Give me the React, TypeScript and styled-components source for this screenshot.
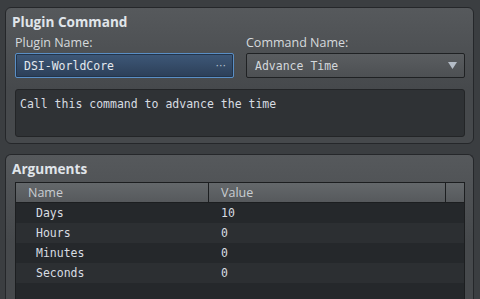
import React from "react";
import styled, { createGlobalStyle } from "styled-components";

const Global = createGlobalStyle`
  html, body { margin: 0; padding: 0; background: #3b3e41; }
  body { width: 480px; height: 299px; overflow: hidden; }
  * { box-sizing: border-box; }
`;

const Page = styled.div`
  display: flex;
  flex-direction: column;
  gap: 10px;
  padding: 7px 6px 0 5px;
  height: 299px;
  font-family: "Open Sans", "Noto Sans", sans-serif;
`;

const Panel = styled.section<{ $grow?: boolean }>`
  border: 1px solid #25272a;
  border-radius: 6px;
  background: linear-gradient(#56595c, #46494c 60%);
  padding: 5px 8px 6px 9px;
  display: flex;
  flex-direction: column;
  ${(p) => (p.$grow ? "flex: 1; border-bottom: none; border-bottom-left-radius: 0; border-bottom-right-radius: 0; padding-bottom: 0;" : "")}
`;

const Title = styled.div`
  font-weight: 700;
  font-size: 13.6px;
  line-height: 18px;
  color: #e0e5ea;
  margin-left: -3px;
`;

const Fields = styled.div`
  display: grid;
  grid-template-columns: 219px 219px;
  column-gap: 12px;
  margin-top: 4px;
`;

const Field = styled.div`
  display: flex;
  flex-direction: column;
`;

const Label = styled.div`
  font-size: 12.5px;
  line-height: 16px;
  color: #d6dadd;
  margin-bottom: 2px;
`;

const mono = `"DejaVu Sans Mono", "Liberation Mono", monospace`;

const InputBox = styled.div<{ $active?: boolean }>`
  height: 25px;
  border-radius: 2px;
  display: flex;
  align-items: center;
  justify-content: space-between;
  padding: 0 7px 0 8px;
  font-family: ${mono};
  font-size: 11.5px;
  border: 1px solid ${(p) => (p.$active ? "#5a8fc6" : "#1f2123")};
  background: ${(p) =>
    p.$active
      ? "linear-gradient(#3e5878, #2c3f58)"
      : "linear-gradient(#5a5d60, #4d5053)"};
  color: ${(p) => (p.$active ? "#e3e8ee" : "#d4d8dc")};
  box-shadow: ${(p) => (p.$active ? "inset 0 0 0 1px #23344a" : "none")};
`;

const Dots = styled.span`
  color: #b9c4d0;
  font-family: "DejaVu Sans", sans-serif;
  font-size: 11px;
`;

const Arrow = styled.svg`
  width: 9px;
  height: 7px;
`;

const Description = styled.div`
  margin-top: 11px;
  height: 48px;
  border: 1px solid #232527;
  border-radius: 3px;
  background: #2f3235;
  padding: 6px 4px 5px;
  font-family: ${mono};
  font-size: 11.5px;
  line-height: 16px;
  color: #d8dde2;
`;

const Table = styled.div`
  margin-top: 4px;
  flex: 1;
  background: #25282b;
  border: 1px solid #1c1e20;
  border-bottom: none;
  display: flex;
  flex-direction: column;
`;

const HeaderRow = styled.div`
  display: grid;
  grid-template-columns: 193px 1fr 18px;
  height: 20px;
  border-bottom: 1px solid #1c1e20;
  background: linear-gradient(#64686b, #56595c);
`;

const HeaderCell = styled.div<{ $pad?: number }>`
  font-size: 12.5px;
  line-height: 19px;
  color: #c9cdd1;
  padding-left: ${(p) => p.$pad ?? 12}px;
  border-right: 1px solid #1c1e20;
  &:last-child { border-right: none; }
`;

const Row = styled.div<{ $alt?: boolean }>`
  display: grid;
  grid-template-columns: 193px 1fr;
  height: 20px;
  align-items: center;
  background: ${(p) => (p.$alt ? "#2c2f32" : "#25282b")};
  font-family: ${mono};
  font-size: 11.5px;
  color: #d8dde2;
`;

const Cell = styled.div<{ $pad: number }>`
  padding-left: ${(p) => p.$pad}px;
`;

const args = [
  ["Days", "10"],
  ["Hours", "0"],
  ["Minutes", "0"],
  ["Seconds", "0"],
];

export default function App() {
  return (
    <>
      <Global />
      <Page>
        <Panel>
          <Title>Plugin Command</Title>
          <Fields>
            <Field>
              <Label>Plugin Name:</Label>
              <InputBox $active>
                <span>DSI-WorldCore</span>
                <Dots>···</Dots>
              </InputBox>
            </Field>
            <Field>
              <Label>Command Name:</Label>
              <InputBox>
                <span>Advance Time</span>
                <Arrow viewBox="0 0 9 7">
                  <path d="M0 0 H9 L4.5 7 Z" fill="#b4bcc6" />
                </Arrow>
              </InputBox>
            </Field>
          </Fields>
          <Description>Call this command to advance the time</Description>
        </Panel>
        <Panel $grow>
          <Title>Arguments</Title>
          <Table>
            <HeaderRow>
              <HeaderCell>Name</HeaderCell>
              <HeaderCell $pad={12}>Value</HeaderCell>
              <HeaderCell />
            </HeaderRow>
            {args.map(([n, v], i) => (
              <Row key={n} $alt={i % 2 === 1}>
                <Cell $pad={20}>{n}</Cell>
                <Cell $pad={12}>{v}</Cell>
              </Row>
            ))}
          </Table>
        </Panel>
      </Page>
    </>
  );
}
